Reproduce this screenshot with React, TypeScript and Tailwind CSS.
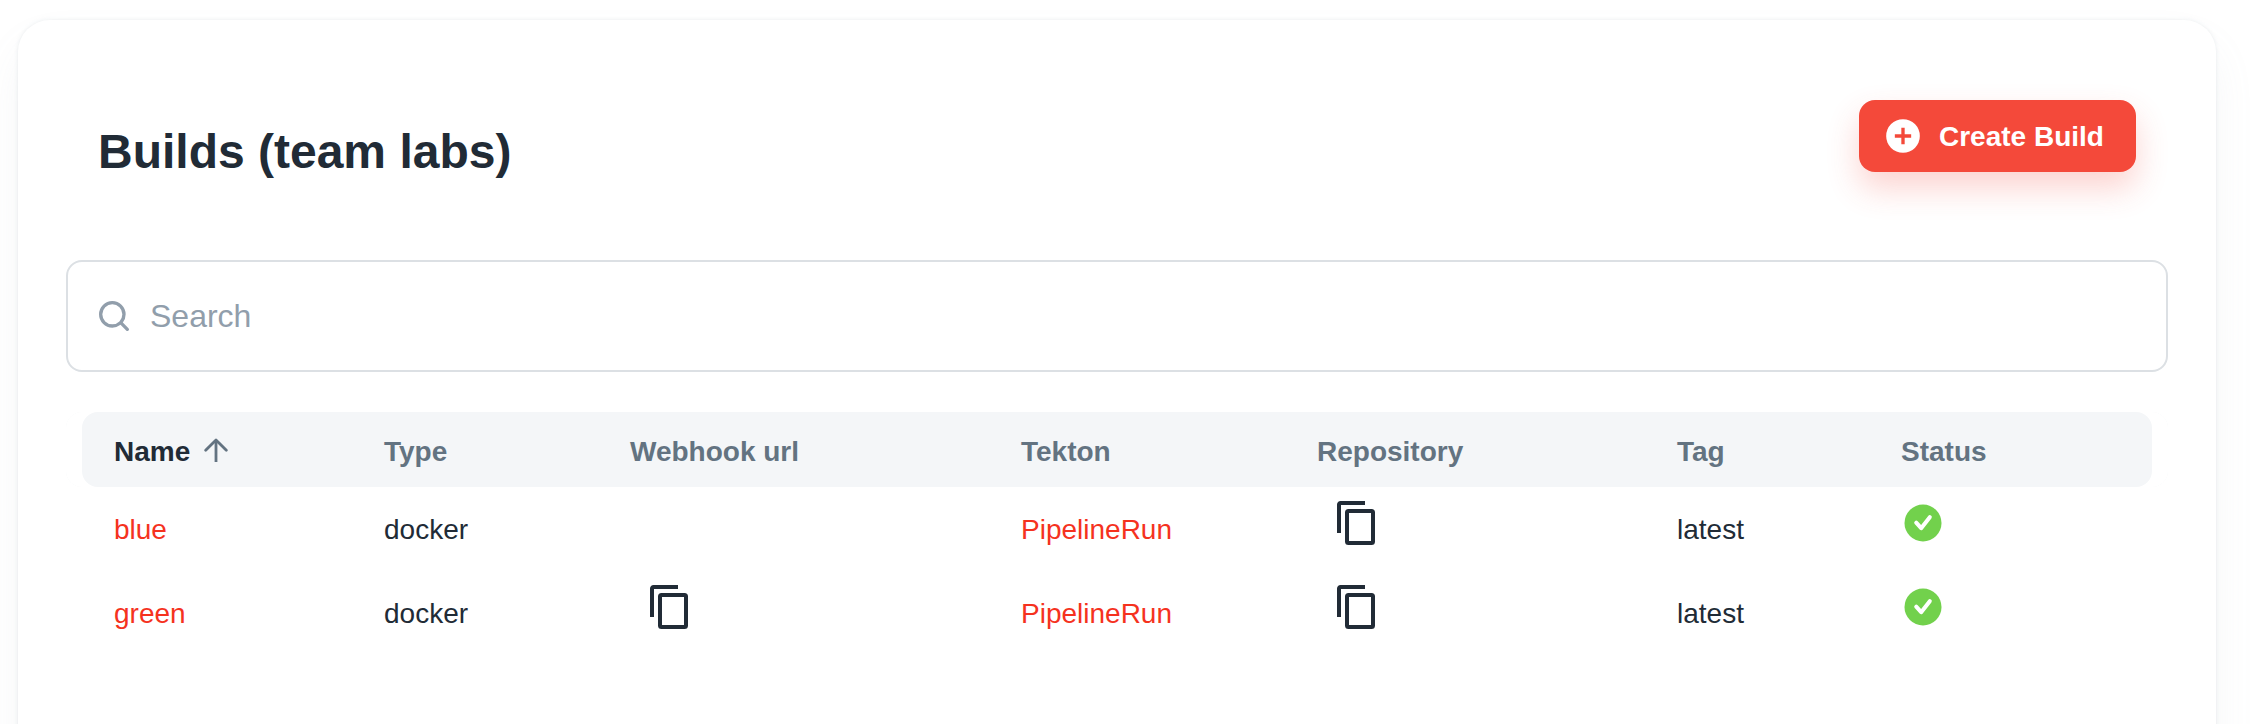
const columns = ['Name', 'Type', 'Webhook url', 'Tekton', 'Repository', 'Tag', 'Status']
const builds = [
  { name: 'blue', type: 'docker', webhook: false, tag: 'latest' },
  { name: 'green', type: 'docker', webhook: true, tag: 'latest' },
]

function CopyIcon() {
  return (
    <svg viewBox="0 0 48 48" className="block h-12 w-12" fill="none" stroke="currentColor" strokeWidth="4">
      <path d="M32 4H7.5A1.5 1.5 0 0 0 6 5.5V34" />
      <rect x="14" y="12" width="26" height="32" rx="1.5" />
    </svg>
  )
}

function CheckIcon() {
  return (
    <svg viewBox="0 0 24 24" className="block h-11 w-11" fill="none">
      <circle cx="12" cy="12" r="10.1" fill="#72d14c" />
      <path d="M8.3 11.8L11 14.8L15.7 8.8" stroke="#fff" strokeWidth="2.2" strokeLinecap="round" strokeLinejoin="round" />
    </svg>
  )
}

const grid = 'grid grid-cols-[318px_246px_391px_296px_360px_224px_267px]'

export default function App() {
  return (
    <div className="h-[724px] overflow-hidden bg-white pt-5 pr-9 pl-[18px] font-['Liberation_Sans',Arial,sans-serif] text-[28px] text-[#212b36]">
      <main className="h-[1000px] rounded-[32px] bg-white px-12 pt-20 shadow-[0_0_4px_0_rgba(145,158,171,0.2),0_24px_48px_-8px_rgba(145,158,171,0.12)]">
        <header className="flex h-40 items-start justify-between px-8">
          <h1 className="pt-4 text-[48px] leading-[72px] font-bold">Builds (team labs)</h1>
          <button className="flex h-[72px] w-[277px] items-center rounded-2xl bg-[#f4493a] pl-6 font-bold text-white shadow-[0_16px_32px_0_rgba(244,73,58,0.24)]">
            <svg viewBox="0 0 24 24" className="mr-4 h-10 w-10" fill="none">
              <circle cx="12" cy="12" r="10.1" fill="#fff" />
              <path d="M12 7.1v9.8M7.1 12h9.8" stroke="#f4493a" strokeWidth="2" />
            </svg>
            <span className="pt-0.5">Create Build</span>
          </button>
        </header>
        <div className="flex h-28 items-center rounded-2xl border-2 border-[#dce0e4] pl-[26px] text-[32px] text-[#919eab]">
          <svg viewBox="0 0 24 24" className="mr-4 h-10 w-10" fill="currentColor">
            <path d="M20.71 19.29l-3.4-3.39A7.92 7.92 0 0 0 19 11a8 8 0 1 0-8 8 7.92 7.92 0 0 0 4.9-1.69l3.39 3.4a1 1 0 0 0 1.42 0 1 1 0 0 0 0-1.42zM5 11a6 6 0 1 1 6 6 6 6 0 0 1-6-6z" />
          </svg>
          Search
        </div>
        <div className={grid + ' mt-10 h-[75px] font-bold text-[#637381]'}>
          {columns.map((c) => (
            <div
              key={c}
              className="flex items-center bg-[#f4f6f8] pt-1 first:rounded-l-2xl first:pl-12 first:text-[#212b36] first:shadow-[inset_16px_0_0_#fff] last:rounded-r-2xl last:shadow-[inset_-16px_0_0_#fff]"
            >
              {c}
              {c === 'Name' && (
                <svg viewBox="0 0 24 24" className="mb-1 ml-[14px] h-6 w-6 text-[#637381]" fill="none" stroke="currentColor" strokeWidth="2.8">
                  <path d="M12 24V2.5" />
                  <path d="M1.7 12.3L12 2L22.3 12.3" strokeLinecap="round" strokeLinejoin="round" />
                </svg>
              )}
            </div>
          ))}
        </div>
        {builds.map((b) => (
          <div key={b.name} className={grid + ' h-[84px] items-center'}>
            <a className="pt-0.5 pl-12 text-[#f5321e]">{b.name}</a>
            <span className="pt-0.5">{b.type}</span>
            <div className="-mt-3 pl-4">{b.webhook && <CopyIcon />}</div>
            <a className="pt-0.5 text-[#f5321e]">PipelineRun</a>
            <div className="-mt-3 pl-4">
              <CopyIcon />
            </div>
            <span className="pt-0.5">{b.tag}</span>
            <div className="-mt-3">
              <CheckIcon />
            </div>
          </div>
        ))}
      </main>
    </div>
  )
}
